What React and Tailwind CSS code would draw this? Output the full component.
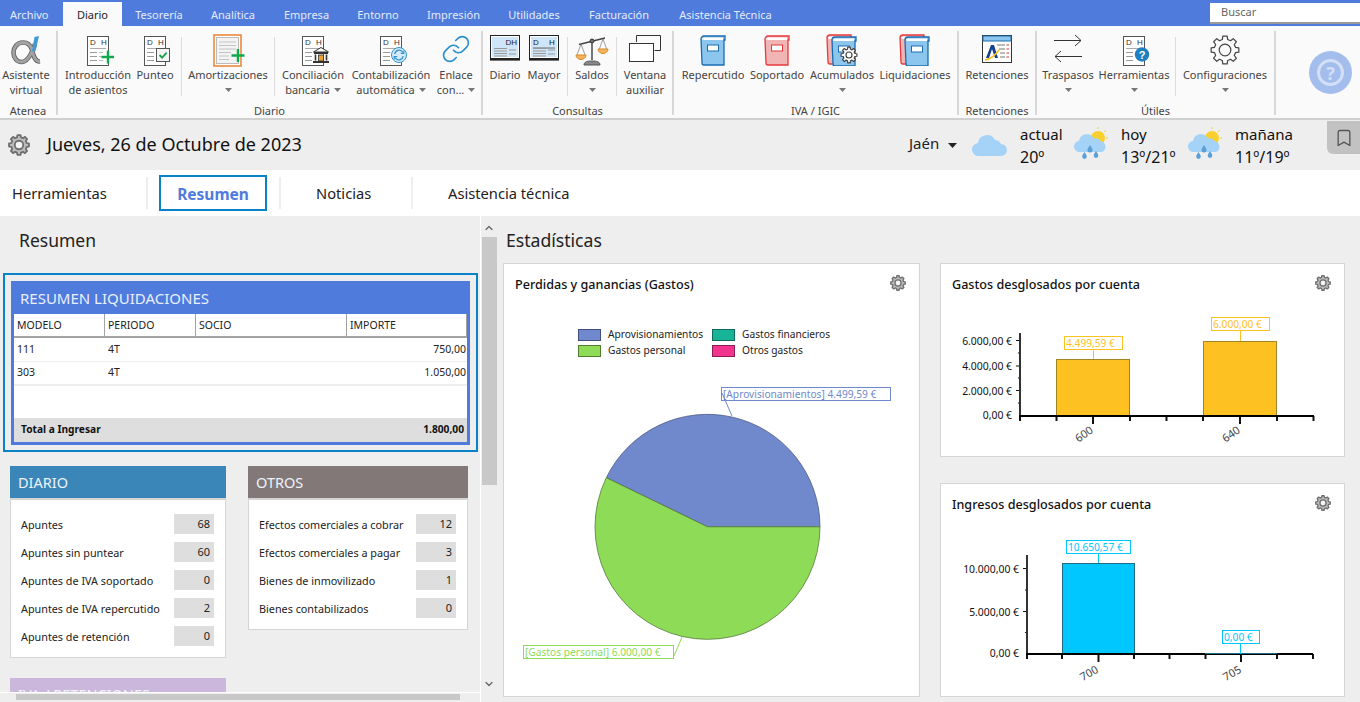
import React from 'react';
import { Link, ChevronUp, ChevronDown, Bookmark } from 'lucide-react';

const topTabs = [
  { label: 'Archivo', cls: 'w-[63px] pl-[10px] pt-[4px]' },
  { label: 'Diario', cls: 'w-[59px] justify-center pt-[2px]', active: true },
  { label: 'Tesorería', cls: 'w-[74px] justify-center pt-[4px]' },
  { label: 'Analítica', cls: 'w-[74px] justify-center pt-[4px]' },
  { label: 'Empresa', cls: 'w-[73px] justify-center pt-[4px]' },
  { label: 'Entorno', cls: 'w-[70px] justify-center pt-[4px]' },
  { label: 'Impresión', cls: 'w-[81px] justify-center pt-[4px]' },
  { label: 'Utilidades', cls: 'w-[80px] justify-center pt-[4px]' },
  { label: 'Facturación', cls: 'w-[90px] justify-center pt-[4px]' },
  { label: 'Asistencia Técnica', cls: 'w-[123px] justify-center pt-[4px]' },
];

const diarioRows = [
  ['Apuntes', 68],
  ['Apuntes sin puntear', 60],
  ['Apuntes de IVA soportado', 0],
  ['Apuntes de IVA repercutido', 2],
  ['Apuntes de retención', 0],
];

const otrosRows = [
  ['Efectos comerciales a cobrar', 12],
  ['Efectos comerciales a pagar', 3],
  ['Bienes de inmovilizado', 1],
  ['Bienes contabilizados', 0],
];

// gear outline, built from the number of teeth
function gearPath(cx, cy, outer, inner, teeth) {
  const step = (Math.PI * 2) / teeth;
  let d = '';
  for (let i = 0; i < teeth; i++) {
    const a = i * step;
    const pts = [
      [inner, a - step * 0.32],
      [outer, a - step * 0.2],
      [outer, a + step * 0.2],
      [inner, a + step * 0.32],
    ];
    pts.forEach(([r, t], j) => {
      const x = (cx + r * Math.cos(t)).toFixed(2);
      const y = (cy + r * Math.sin(t)).toFixed(2);
      d += `${i === 0 && j === 0 ? 'M' : 'L'}${x} ${y} `;
    });
  }
  return d + 'Z';
}

function Gear({ size = 16 }) {
  return (
    <svg width={size} height={size} viewBox="0 0 24 24">
      <path d={gearPath(12, 12, 11, 8.6, 8)} fill="#bdbdbd" stroke="#6f6f6f" strokeWidth="2" strokeLinejoin="round" />
      <circle cx="12" cy="12" r="4.6" fill="#f4f4f4" stroke="#6f6f6f" strokeWidth="2" />
    </svg>
  );
}

function DocBase({ children }) {
  return (
    <svg width="32" height="32" viewBox="0 0 32 32" fontFamily="'Liberation Sans',sans-serif">
      <rect x="5.5" y="2.5" width="21" height="29" fill="#fff" stroke="#555" />
      <text x="8" y="10.5" fontSize="8" fill="#333">D</text>
      <text x="19" y="10.5" fontSize="8" fill="#333">H</text>
      <path d="M8 14.5h16" stroke="#aaa" />
      <path d="M8 18.5h7M8 22.5h7M8 26.5h7" stroke="#999" />
      {children}
    </svg>
  );
}

function IconIntro() {
  return (
    <DocBase>
      <path d="M17 18.5h4M17 22.5h3M17 26.5h4" stroke="#bbb" />
      <path d="M26 16.5v13M19.5 23h13" stroke="#0ea84f" strokeWidth="2.4" />
    </DocBase>
  );
}

function IconPunteo() {
  return (
    <DocBase>
      <rect x="17.5" y="14.5" width="13" height="13" fill="#f4f4f4" stroke="#555" />
      <path d="M20.5 21l2.6 2.6 4.6-5" fill="none" stroke="#1aa34f" strokeWidth="1.8" />
    </DocBase>
  );
}

function IconAmort() {
  return (
    <svg width="34" height="34" viewBox="0 0 34 34">
      <rect x="3" y="1" width="27" height="31" fill="#fff" stroke="#ea8a3c" strokeWidth="1.6" />
      <rect x="5.5" y="3.5" width="22" height="26" fill="#f3f3f3" stroke="#bbb" />
      <path d="M8 8h17M8 11.5h17M8 15h17M8 18.5h12M8 22h10M8 25.5h10" stroke="#c4c4c4" />
      <path d="M27 15v13M20.5 21.5h13" stroke="#0ea84f" strokeWidth="2.4" />
    </svg>
  );
}

function IconBank() {
  return (
    <DocBase>
      <path d="M16.5 18l7.5-4.5 7.5 4.5z" fill="#fff" stroke="#333" />
      <rect x="17" y="18" width="14" height="2" fill="#333" />
      <path d="M18.5 20.5v6M29.5 20.5v6" stroke="#333" strokeWidth="1.6" />
      <rect x="21.5" y="21" width="5" height="6" fill="#f0a030" stroke="#333" strokeWidth="0.8" />
      <rect x="16" y="27" width="16" height="2" fill="#333" />
    </DocBase>
  );
}

function IconSync() {
  return (
    <DocBase>
      <circle cx="24" cy="21" r="7.5" fill="#d5ebf9" stroke="#2f92d0" />
      <path d="M19.8 20a4.4 4.4 0 0 1 7.6-2.4l1 1M28.2 22a4.4 4.4 0 0 1-7.6 2.4l-1-1" fill="none" stroke="#2f92d0" strokeWidth="1.3" />
      <path d="M28.8 16.4v3h-3M19.2 25.6v-3h3" fill="none" stroke="#2f92d0" strokeWidth="1.1" />
    </DocBase>
  );
}

function IconHelpDoc() {
  return (
    <DocBase>
      <circle cx="24" cy="20.5" r="7.2" fill="#1f7fc0" />
      <text x="24" y="24.5" textAnchor="middle" fontSize="11" fontWeight="700" fill="#fff">?</text>
    </DocBase>
  );
}

// Atenea logo
function IconAlpha() {
  const d = 'M30 27.500C25 28 23.500 22 22 16C20.500 10.500 17 8.500 13 8.500C7 8.500 3.500 13.500 3.500 18.500C3.500 24 7 28 11.500 28C18 28 22 19 25 10';
  return (
    <svg width="32" height="32" viewBox="0 0 32 32" fill="none">
      <path d={d} stroke="#666" strokeWidth="4.6" />
      <path d={d} stroke="#a3a3a3" strokeWidth="2.8" />
      <path d="M24.500 3l4.500-1-3.500 15-3.500 0.500z" fill="#3f9ad6" />
    </svg>
  );
}

function IconWindow({ spread }) {
  return (
    <svg width="32" height="28" viewBox="0 0 32 28" fontFamily="'Liberation Sans',sans-serif">
      <rect x="1.5" y="1.5" width="29" height="23" fill="#fff" stroke="#222" />
      <rect x="3" y="3" width="26" height="20" fill="#cfe6f8" />
      <rect x="1" y="25" width="30" height="1.6" fill="#222" />
      {spread ? (
        <>
          <text x="5" y="11" fontSize="8" fill="#222">D</text>
          <text x="21" y="11" fontSize="8" fill="#222">H</text>
          <path d="M5 14h22" stroke="#666" />
        </>
      ) : (
        <text x="28" y="11" textAnchor="end" fontSize="8" fill="#222">DH</text>
      )}
      <path d="M5 14.5h13M5 17h13M5 19.5h13M5 22h13" stroke="#999" />
      <path d="M20 16h7M20 20h7" stroke="#999" />
    </svg>
  );
}

function IconScale() {
  return (
    <svg width="34" height="32" viewBox="0 0 34 32">
      <path d="M17 5v21" stroke="#555" strokeWidth="1.6" />
      <path d="M4 10.5L30 4" stroke="#444" strokeWidth="1.4" />
      <circle cx="17" cy="7" r="2" fill="#777" stroke="#333" />
      <path d="M6 10l-4 11M6 10l4 11M28 5l-4 11M28 5l4 11" stroke="#777" strokeWidth="0.7" fill="none" />
      <path d="M1 21h10a5 4.5 0 0 1-10 0zM23 15h10a5 4.5 0 0 1-10 0z" fill="#f4b45e" stroke="#d98a2c" />
      <path d="M9 31c0-3 3-4 8-4s8 1 8 4z" fill="#888" stroke="#555" />
    </svg>
  );
}

function IconWindows() {
  return (
    <svg width="34" height="32" viewBox="0 0 34 32">
      <path d="M8.5 8V1.5h24v15h-6" fill="none" stroke="#333" strokeWidth="1" />
      <rect x="1.5" y="9.5" width="24" height="18" fill="#fff" stroke="#333" />
    </svg>
  );
}

function Book({ x, y, fill, stroke, w = 24, h = 29 }) {
  return (
    <g>
      <path d={`M${x} ${y + 3}a3 3 0 0 1 3-3h${w - 3}v4h-1v${h - 4}h-${w - 4}a2 2 0 0 1-2-2z`} fill={fill} stroke={stroke} strokeWidth="1.3" />
      <path d={`M${x + 1} ${y + 3.5}a2 2 0 0 1 2-2h${w - 5}v2.5h-${w - 5}z`} fill="#fff" />
      <rect x={x + 6.5} y={y + 9} width={w - 13} height="6" fill="#fff" stroke={stroke} />
    </g>
  );
}

function IconBook({ fill, stroke }) {
  return (
    <svg width="32" height="32" viewBox="0 0 32 32">
      <Book x={4} y={2} fill={fill} stroke={stroke} />
    </svg>
  );
}

function IconBookPair({ gear }) {
  return (
    <svg width="34" height="32" viewBox="0 0 34 32">
      <Book x={2} y={1} fill="#f2b5b5" stroke="#e83a3a" />
      <Book x={7} y={3} fill="#8cc6ee" stroke="#1a6cb0" />
      {gear && (
        <g>
          <path d={gearPath(24, 21, 8, 6, 8)} fill="#fff" stroke="#444" strokeWidth="1.2" strokeLinejoin="round" />
          <circle cx="24" cy="21" r="3" fill="#fff" stroke="#444" strokeWidth="1.2" />
        </g>
      )}
    </svg>
  );
}

function IconRetenciones() {
  return (
    <svg width="32" height="30" viewBox="0 0 32 30">
      <rect x="1.5" y="1.5" width="29" height="27" fill="#fff" stroke="#333" />
      <rect x="2" y="2" width="28" height="5" fill="#8cc6ee" stroke="#1a6cb0" />
      <path d="M5 24l5-13h3l4 13h-3l-3-9-3 9z" fill="#173f8f" />
      <path d="M4 26c5-1 10-4 14-10" fill="none" stroke="#f4c21a" strokeWidth="1.6" />
      <path d="M16 11h8M18 15h6M19 19h5M19 23h5" stroke="#777" />
      <path d="M25.5 11h2.5M25.5 15h2.5M25.5 19h2.5M25.5 23h2.5" stroke="#d33" />
    </svg>
  );
}

function IconArrows() {
  return (
    <svg width="32" height="30" viewBox="0 0 32 30" fill="none" stroke="#333" strokeWidth="1">
      <path d="M2 6.5h27M23 1l6 5.5-6 5.5" />
      <path d="M30 22.5H3M9 17l-6 5.5 6 5.5" />
    </svg>
  );
}

function IconConfig() {
  return (
    <svg width="32" height="32" viewBox="0 0 32 32">
      <path d={gearPath(16, 16, 14, 10.8, 8)} fill="none" stroke="#444" strokeWidth="1.2" strokeLinejoin="round" />
      <circle cx="16" cy="16" r="5.8" fill="none" stroke="#444" strokeWidth="1.2" />
    </svg>
  );
}

function Caret({ className = '' }) {
  return (
    <svg width="7" height="4" viewBox="0 0 7 4" className={className}>
      <path d="M0 0h7L3.5 4z" fill="#777" />
    </svg>
  );
}

function RibbonItem({ width, icon, lines, caret }) {
  return (
    <div className={`flex flex-col items-center shrink-0 ${width}`}>
      <div className="h-[36px] pt-[3px] flex justify-center">{icon}</div>
      {lines.map((line, i) => (
        <div key={line} className="h-[15px] leading-[15px] text-[11px] text-[#444] whitespace-nowrap flex items-center">
          {line}
          {caret && i === lines.length - 1 && lines.length > 1 && <Caret className="ml-[4px]" />}
        </div>
      ))}
      {caret && lines.length === 1 && (
        <div className="h-[15px] flex items-center">
          <Caret />
        </div>
      )}
    </div>
  );
}

function RibbonSep({ className }) {
  return <div className={`w-px h-[59px] mt-[6px] bg-[#dcdcdc] shrink-0 ${className}`} />;
}

function RibbonGroup({ label, width, pad, children }) {
  return (
    <div className={`h-[84px] mt-[5px] border-r-2 border-[#d8d8d8] shrink-0 ${width}`}>
      <div className={`flex items-start h-[73px] ${pad}`}>{children}</div>
      <div className="text-center text-[11px] leading-[14px] text-[#444]">{label}</div>
    </div>
  );
}

function Ribbon() {
  return (
    <div className="flex h-[94px] bg-[#fafafa] border-b-2 border-[#d0d0d0]">
      <RibbonGroup label="Atenea" width="w-[58px]" pad="">
        <RibbonItem width="w-[52px]" icon={<IconAlpha />} lines={['Asistente', 'virtual']} />
      </RibbonGroup>
      <RibbonGroup label="Diario" width="w-[425px]" pad="pl-[6px]">
        <RibbonItem width="w-[68px]" icon={<IconIntro />} lines={['Introducción', 'de asientos']} />
        <div className="w-[2px]" />
        <RibbonItem width="w-[42px]" icon={<IconPunteo />} lines={['Punteo']} />
        <RibbonSep className="ml-[5px]" />
        <div className="w-[6px]" />
        <RibbonItem width="w-[80px]" icon={<IconAmort />} lines={['Amortizaciones']} caret />
        <RibbonSep className="ml-[6px]" />
        <div className="w-[5px]" />
        <RibbonItem width="w-[66px]" icon={<IconBank />} lines={['Conciliación', 'bancaria']} caret />
        <div className="w-[4px]" />
        <RibbonItem width="w-[82px]" icon={<IconSync />} lines={['Contabilización', 'automática']} caret />
        <div className="w-[4px]" />
        <RibbonItem width="w-[40px]" icon={<Link size={30} strokeWidth={1.3} color="#2a8fd0" />} lines={['Enlace', 'con...']} caret />
      </RibbonGroup>
      <RibbonGroup label="Consultas" width="w-[191px]" pad="pl-[4px]">
        <RibbonItem width="w-[36px]" icon={<IconWindow />} lines={['Diario']} />
        <div className="w-[2px]" />
        <RibbonItem width="w-[38px]" icon={<IconWindow spread />} lines={['Mayor']} />
        <RibbonSep className="ml-[4px]" />
        <div className="w-[4px]" />
        <RibbonItem width="w-[40px]" icon={<IconScale />} lines={['Saldos']} caret />
        <RibbonSep className="ml-[4px]" />
        <div className="w-[5px]" />
        <RibbonItem width="w-[46px]" icon={<IconWindows />} lines={['Ventana', 'auxiliar']} />
      </RibbonGroup>
      <RibbonGroup label="IVA / IGIC" width="w-[285px]" pad="pl-[6px]">
        <RibbonItem width="w-[66px]" icon={<IconBook fill="#8cc6ee" stroke="#1a6cb0" />} lines={['Repercutido']} />
        <div className="w-[2px]" />
        <RibbonItem width="w-[58px]" icon={<IconBook fill="#f2b5b5" stroke="#e83a3a" />} lines={['Soportado']} />
        <div className="w-[2px]" />
        <RibbonItem width="w-[68px]" icon={<IconBookPair gear />} lines={['Acumulados']} caret />
        <div className="w-[2px]" />
        <RibbonItem width="w-[74px]" icon={<IconBookPair />} lines={['Liquidaciones']} />
      </RibbonGroup>
      <RibbonGroup label="Retenciones" width="w-[78px]" pad="pl-[3px]">
        <RibbonItem width="w-[70px]" icon={<IconRetenciones />} lines={['Retenciones']} />
      </RibbonGroup>
      <RibbonGroup label="Útiles" width="w-[239px]" pad="pl-[5px]">
        <RibbonItem width="w-[52px]" icon={<IconArrows />} lines={['Traspasos']} caret />
        <div className="w-[4px]" />
        <RibbonItem width="w-[72px]" icon={<IconHelpDoc />} lines={['Herramientas']} caret />
        <RibbonSep className="ml-[5px]" />
        <div className="w-[6px]" />
        <RibbonItem width="w-[86px]" icon={<IconConfig />} lines={['Configuraciones']} caret />
      </RibbonGroup>
      <div className="ml-[33px] mt-[25px] w-[43px] h-[43px] rounded-full bg-[#a3bdec] flex items-center justify-center">
        <div className="w-[27px] h-[27px] rounded-full border-[3px] border-[#d3dff6] flex items-center justify-center text-[18px] font-bold leading-none text-[#d3dff6]">?</div>
      </div>
    </div>
  );
}

function Cloud({ className }) {
  return (
    <svg width="36" height="24" viewBox="0 0 36 24" className={className}>
      <path d="M7 23a6.5 6.5 0 0 1-1-13 9 9 0 0 1 17-3 7 7 0 0 1 6 4 6 6 0 0 1 0 12z" fill="#a4d3f7" />
    </svg>
  );
}

function RainCloud() {
  return (
    <svg width="34" height="36" viewBox="0 0 34 36">
      <circle cx="24" cy="11" r="7" fill="#f9cf2d" />
      <path d="M24 0v2M32 3l-2 2M34 11h-2" stroke="#f9cf2d" strokeWidth="1" />
      <path d="M6 25a5.5 5.5 0 0 1-1-11 8 8 0 0 1 15-2.500 6.500 6.500 0 0 1 7 3 5.500 5.500 0 0 1 1 10.500z" fill="#a4d3f7" />
      <path d="M16 18c2 3 2.500 4 2.500 5a2.500 2.500 0 0 1-5 0c0-1 .5-2 2.500-5zM10.500 25c1.800 2.700 2.300 3.600 2.300 4.600a2.300 2.300 0 0 1-4.600 0c0-1 .5-1.900 2.300-4.600zM22 24c1.800 2.700 2.300 3.600 2.300 4.600a2.300 2.300 0 0 1-4.600 0c0-1 .5-1.900 2.300-4.600z" fill="#5a9fd6" />
    </svg>
  );
}

function WeatherText({ width, top, bottom }) {
  return (
    <div className={`leading-[23px] pt-px text-[#111] shrink-0 ${width}`}>
      <div className="text-[15px]">{top}</div>
      <div className="text-[16px]">{bottom}</div>
    </div>
  );
}

function DateBar() {
  return (
    <div className="flex h-[50px] bg-[#eeeeee]">
      <div className="ml-[8px] flex items-center">
        <Gear size={22} />
      </div>
      <div className="ml-[17px] flex items-center pb-[2px] text-[18px] text-[#111] whitespace-nowrap">Jueves, 26 de Octubre de 2023</div>
      <div className="flex-1" />
      <div className="flex items-center pb-[3px] text-[15px] text-[#222] w-[39px] shrink-0">Jaén</div>
      <div className="flex items-center shrink-0 w-[9px]">
        <svg width="9" height="5" viewBox="0 0 9 5"><path d="M0 0h9L4.500 5z" fill="#222" /></svg>
      </div>
      <div className="ml-[15px] flex items-center shrink-0"><Cloud /></div>
      <div className="ml-[12px] flex items-center"><WeatherText width="w-[54px]" top="actual" bottom="20º" /></div>
      <div className="flex items-center shrink-0"><RainCloud /></div>
      <div className="ml-[13px] flex items-center"><WeatherText width="w-[67px]" top="hoy" bottom="13º/21º" /></div>
      <div className="flex items-center shrink-0"><RainCloud /></div>
      <div className="ml-[13px] flex items-center"><WeatherText width="w-[92px]" top="mañana" bottom="11º/19º" /></div>
      <div className="w-[33px] h-[33px] mt-px bg-[#c2c2c2] rounded-bl-[6px] flex items-center justify-center shrink-0">
        <Bookmark size={20} strokeWidth={1.6} color="#555" />
      </div>
    </div>
  );
}

function SubTabs() {
  return (
    <div className="flex items-center h-[46px] bg-white text-[14.7px] text-[#222]">
      <div className="w-[146px] pl-[12px] pt-px shrink-0">Herramientas</div>
      <div className="w-[2px] h-[32px] bg-[#eeeeee] shrink-0" />
      <div className="ml-[11px] w-[108px] h-[36px] border-2 border-[#0a82c8] flex items-center justify-center pt-[3px] font-bold text-[15.5px] text-[#4e7bdc] shrink-0">Resumen</div>
      <div className="ml-[12px] w-[2px] h-[32px] bg-[#eeeeee] shrink-0" />
      <div className="w-[130px] pl-[35px] pt-px shrink-0">Noticias</div>
      <div className="w-[2px] h-[32px] bg-[#eeeeee] shrink-0" />
      <div className="pl-[35px] pt-px">Asistencia técnica</div>
    </div>
  );
}

function LiquidacionesTable() {
  const cell = 'px-[3px] flex items-center';
  return (
    <div className="ml-[3px] w-[475px] h-[179px] border-2 border-[#0a82c8] p-[6px]">
      <div className="bg-[#4e7bdc] h-[164px] px-[3px] pb-[3px]">
        <div className="h-[33px] flex items-center pl-[6px] pt-px text-[15px] text-[#e9efff]">RESUMEN LIQUIDACIONES</div>
        <div className="bg-white h-[128px] text-[10.5px] text-[#222] flex flex-col">
          <div className="flex h-[24px] border-b-2 border-[#a3a3a3] shrink-0">
            <div className={`${cell} pt-[2px] w-[91px] border-r border-[#a3a3a3]`}>MODELO</div>
            <div className={`${cell} pt-[2px] w-[91px] border-r border-[#a3a3a3]`}>PERIODO</div>
            <div className={`${cell} pt-[2px] w-[151px] border-r border-[#a3a3a3]`}>SOCIO</div>
            <div className={`${cell} pt-[2px] w-[120px] border-r border-[#a3a3a3]`}>IMPORTE</div>
          </div>
          <div className="flex h-[24px] border-b border-[#eeeeee] shrink-0">
            <div className={`${cell} w-[91px]`}>111</div>
            <div className={`${cell} w-[242px]`}>4T</div>
            <div className={`${cell} flex-1 justify-end pr-px`}>750,00</div>
          </div>
          <div className="flex h-[24px] border-b-2 border-[#eeeeee] shrink-0">
            <div className={`${cell} w-[91px]`}>303</div>
            <div className={`${cell} w-[242px]`}>4T</div>
            <div className={`${cell} flex-1 justify-end pr-px`}>1.050,00</div>
          </div>
          <div className="flex-1" />
          <div className="flex h-[24px] bg-[#dedede] items-center justify-between pl-[7px] pr-[3px] text-[10.2px] font-bold text-[#111] shrink-0">
            <span>Total a Ingresar</span>
            <span>1.800,00</span>
          </div>
        </div>
      </div>
    </div>
  );
}

function StatCard({ title, headerClass, rows }) {
  return (
    <div>
      <div className={`h-[32px] flex items-center pl-[8px] pt-[2px] text-[14.5px] text-[#eef3f8] ${headerClass}`}>{title}</div>
      <div className="bg-white border border-t-2 border-[#d5d5d5] pt-[14px] pb-[11px] pl-[10px] pr-[11px] flex flex-col gap-[8px]">
        {rows.map(([label, value]) => (
          <div key={label} className="flex items-center justify-between h-[20px] text-[10.8px] text-[#222]">
            <span className="whitespace-nowrap pt-[3px]">{label}</span>
            <span className="w-[40px] h-[20px] bg-[#dedede] flex items-center justify-end pr-[4px] pt-px text-[11px]">{value}</span>
          </div>
        ))}
      </div>
    </div>
  );
}

function LeftPanel() {
  return (
    <div className="w-[480px] h-[486px] flex flex-col shrink-0">
      <div className="h-[476px] overflow-hidden">
        <div className="h-[57px] pl-[19px] pt-[10px] text-[17.5px] leading-[28px] text-[#222]">Resumen</div>
        <LiquidacionesTable />
        <div className="flex items-start ml-[10px] mt-[14px] gap-[22px]">
          <div className="w-[216px] shrink-0">
            <StatCard title="DIARIO" headerClass="bg-[#3a86b9]" rows={diarioRows} />
            <div className="mt-[20px] h-[32px] bg-[#ccb7dc] flex items-center pl-[8px] pt-[2px] text-[14.5px] text-[#eef3f8]">IVA / RETENCIONES</div>
          </div>
          <div className="w-[220px] shrink-0">
            <StatCard title="OTROS" headerClass="bg-[#837878]" rows={otrosRows} />
          </div>
        </div>
      </div>
      <div className="h-[10px] bg-[#eeeeee] border-t border-white pl-[16px] pt-px">
        <div className="w-[444px] h-[6px] bg-[#c8c8c8]" />
      </div>
    </div>
  );
}

function VScrollBar() {
  return (
    <div className="w-[17px] h-[486px] border-l border-white flex flex-col items-center shrink-0">
      <div className="h-[21px] flex items-end pb-[3px]"><ChevronUp size={12} strokeWidth={2.5} color="#666" /></div>
      <div className="w-[15px] h-[248px] bg-[#c8c8c8]" />
      <div className="h-[205px] flex items-end"><ChevronDown size={12} strokeWidth={2.5} color="#666" /></div>
    </div>
  );
}

const legend = [
  { x: 578, y: 329, fill: '#7088cc', stroke: '#3f4f80', label: 'Aprovisionamientos', tx: 608 },
  { x: 712, y: 329, fill: '#17b497', stroke: '#0e6b5a', label: 'Gastos financieros', tx: 742 },
  { x: 578, y: 345, fill: '#8edb58', stroke: '#4f7d30', label: 'Gastos personal', tx: 608 },
  { x: 712, y: 345, fill: '#f2348f', stroke: '#8a1d52', label: 'Otros gastos', tx: 742 },
];

function PieChart() {
  return (
    <svg width="415" height="391" viewBox="504 305 415 391" fontFamily="'Noto Sans',sans-serif" className="block">
      {legend.map((l) => (
        <g key={l.label}>
          <rect x={l.x + 0.5} y={l.y + 0.5} width="22" height="11" fill={l.fill} stroke={l.stroke} />
          <text x={l.tx} y={l.y + 9} fontSize="10.200" fill="#222">{l.label}</text>
        </g>
      ))}
      <path d="M707.500 526.800L820 526.800A112.500 112.500 0 0 0 606.300 477.700Z" fill="#7088cc" stroke="#4d5c80" strokeWidth="0.8" />
      <path d="M707.500 526.800L606.300 477.700A112.500 112.500 0 1 0 820 526.800Z" fill="#8edb58" stroke="#557a3a" strokeWidth="0.8" />
      <path d="M722 393L732 416" stroke="#7088cc" />
      <rect x="721.500" y="387.500" width="169" height="13" fill="none" stroke="#7088cc" />
      <text x="723" y="398" fontSize="10.200" fill="#7088cc">[Aprovisionamientos] 4.499,59 €</text>
      <path d="M674 656L682 637" stroke="#8edb58" />
      <rect x="523.500" y="645.500" width="150" height="13" fill="#fff" stroke="#8edb58" />
      <text x="525" y="656" fontSize="10.200" fill="#8edb58">[Gastos personal] 6.000,00 €</text>
    </svg>
  );
}

function Axes({ x0, x1, y0, y1, xTicks, longTicks, yTicks, minor, yLabels, labelX }) {
  return (
    <g>
      {xTicks.map((x) => (
        <path key={x} d={`M${x} ${y0}v${longTicks.includes(x) ? 8 : 5}`} stroke="#111" strokeWidth="2" />
      ))}
      {yTicks.map((y) => (
        <path key={y} d={`M${x0 - 4} ${y}h4`} stroke="#111" />
      ))}
      {minor.map((y) => (
        <path key={y} d={`M${x0 - 2} ${y}h2`} stroke="#111" />
      ))}
      {yLabels.map(([y, text]) => (
        <text key={text} x={labelX} y={y + 4} textAnchor="end" fontSize="10.400" fill="#111">{text}</text>
      ))}
      <path d={`M${x0} ${y1}V${y0}`} stroke="#333" strokeWidth="2" />
      <path d={`M${x0 - 1} ${y0}H${x1}`} stroke="#000" strokeWidth="2" />
    </g>
  );
}

function Callout({ x, y, w, lineX, lineTo, color, text }) {
  return (
    <g>
      <path d={`M${lineX} ${y + 13}V${lineTo}`} stroke={color} />
      <rect x={x + 0.5} y={y + 0.5} width={w} height="13" fill="#fff" stroke={color} />
      <text x={x + 2} y={y + 11} fontSize="10.200" fill={color}>{text}</text>
    </g>
  );
}

function GastosChart() {
  return (
    <svg width="403" height="151" viewBox="941 305 403 151" fontFamily="'Noto Sans',sans-serif" className="block">
      <rect x="1056.500" y="359.500" width="73" height="56" fill="#fec122" stroke="#a08424" />
      <rect x="1203.500" y="341.500" width="73" height="74" fill="#fec122" stroke="#a08424" />
      <Axes
        x0={1020} x1={1314} y0={416} y1={333}
        xTicks={[1020, 1056.5, 1093, 1130, 1166.5, 1203, 1240, 1277, 1313.5]}
        longTicks={[1093, 1240]}
        yTicks={[390.5, 366, 340.5]} minor={[403, 378, 353]}
        yLabels={[[340.5, '6.000,00 €'], [366, '4.000,00 €'], [390.5, '2.000,00 €'], [415, '0,00 €']]}
        labelX={1012}
      />
      <Callout x={1064} y={336} w={58} lineX={1093.5} lineTo={359} color="#fec122" text="4.499,59 €" />
      <Callout x={1211} y={317} w={58} lineX={1240.5} lineTo={341} color="#fec122" text="6.000,00 €" />
      <text x="1084" y="438" textAnchor="middle" fontSize="11" fill="#444" transform="rotate(-35 1084 434)">600</text>
      <text x="1231" y="438" textAnchor="middle" fontSize="11" fill="#444" transform="rotate(-35 1231 434)">640</text>
    </svg>
  );
}

function IngresosChart() {
  return (
    <svg width="403" height="171" viewBox="941 525 403 171" fontFamily="'Noto Sans',sans-serif" className="block">
      <rect x="1062.500" y="563.500" width="72" height="90" fill="#00c8ff" stroke="#206a85" />
      <Axes
        x0={1027} x1={1313} y0={654} y1={555}
        xTicks={[1027, 1062, 1098.5, 1134, 1169.5, 1205.5, 1241, 1277, 1313]}
        longTicks={[1098.5, 1241]}
        yTicks={[611.5, 568.5]} minor={[632.5, 590]}
        yLabels={[[568.5, '10.000,00 €'], [611.5, '5.000,00 €'], [653, '0,00 €']]}
        labelX={1019}
      />
      <path d="M1205 653.500H1277" stroke="#1a6f88" />
      <Callout x={1066} y={540} w={64} lineX={1098.5} lineTo={563} color="#00c8ff" text="10.650,57 €" />
      <Callout x={1222} y={630} w={37} lineX={1240.5} lineTo={654} color="#00c8ff" text="0,00 €" />
      <text x="1089" y="677" textAnchor="middle" fontSize="11" fill="#444" transform="rotate(-30 1089 673)">700</text>
      <text x="1232" y="677" textAnchor="middle" fontSize="11" fill="#444" transform="rotate(-30 1232 673)">705</text>
    </svg>
  );
}

function ChartCard({ title, className, children }) {
  return (
    <div className={`bg-white border border-[#d5d5d5] shrink-0 overflow-hidden ${className}`}>
      <div className="h-[41px] pl-[11px] pr-[13px] flex items-center justify-between text-[12.6px] font-medium text-[#111]">
        <span className="pt-[2px]">{title}</span>
        <span className="-mt-[3px]"><Gear size={16} /></span>
      </div>
      {children}
    </div>
  );
}

function RightPanel() {
  return (
    <div className="flex-1 pl-[6px] min-w-0">
      <div className="h-[47px] pl-[3px] pt-[10px] text-[17.6px] leading-[28px] text-[#222]">Estadísticas</div>
      <div className="flex items-start gap-[20px]">
        <ChartCard title="Perdidas y ganancias (Gastos)" className="w-[417px] h-[434px]">
          <PieChart />
        </ChartCard>
        <div className="flex flex-col gap-[26px]">
          <ChartCard title="Gastos desglosados por cuenta" className="w-[405px] h-[194px]">
            <GastosChart />
          </ChartCard>
          <ChartCard title="Ingresos desglosados por cuenta" className="w-[405px] h-[214px]">
            <IngresosChart />
          </ChartCard>
        </div>
      </div>
    </div>
  );
}

export default function App() {
  return (
    <div className="w-[1360px] h-[702px] overflow-hidden bg-[#eeeeee] font-['Noto_Sans',sans-serif]">
      {/* Top tabs */}
      <div className="flex h-[26px] bg-[#4e7bdc]">
        {topTabs.map((t) => (
          <div
            key={t.label}
            className={`flex items-center shrink-0 text-[11px] ${t.cls} ${t.active ? 'bg-[#fafafa] text-[#222] mt-[2px] h-[24px]' : 'text-[#e4ebfb]'}`}
          >
            {t.label}
          </div>
        ))}
        <div className="ml-auto mt-[3px] w-[150px] h-[21px] bg-white border-b-2 border-[#999] pl-[11px] text-[11px] leading-[18px] text-[#666]">Buscar</div>
      </div>
      <Ribbon />
      <DateBar />
      <SubTabs />
      <div className="flex h-[486px]">
        <LeftPanel />
        <VScrollBar />
        <RightPanel />
      </div>
    </div>
  );
}
